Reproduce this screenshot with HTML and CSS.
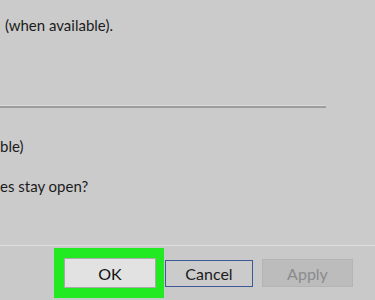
FILE: index.html
```html
<!DOCTYPE html>
<html lang="en">
<head>
    <meta charset="UTF-8">
    <meta name="viewport" content="width=device-width, initial-scale=1.0">
    <title>Options</title>
    <link rel="stylesheet" href="styles.css">
</head>
<body>
<div class="dialog">
    <div class="options">
        <p class="line first">(when available).</p>
        <div class="separator"></div>
        <p class="line second">ble)</p>
        <p class="line third">es stay open?</p>
    </div>
    <div class="footer">
        <span class="highlight"><button class="btn ok">OK</button></span>
        <button class="btn cancel">Cancel</button>
        <button class="btn apply" disabled>Apply</button>
    </div>
</div>
</body>
</html>
```

FILE: styles.css
```css
body {
    margin: 0;
    width: 375px;
    height: 300px;
    overflow: hidden;
    background: #cbcbcc;
    font-family: Lato, "Open Sans", Arial, sans-serif;
    font-size: 15px;
    color: #1b1b1b;
}
.dialog {
    display: flex;
    flex-direction: column;
    height: 300px;
}
.options {
    height: 245px;
}
.line {
    margin: 0;
    line-height: 20px;
    white-space: nowrap;
}
.line.first {
    padding-top: 15px;
    margin-left: 5px;
}
.separator {
    margin-top: 70px;
    width: 326px;
    height: 2px;
    background: #9d9d9e;
    border-top: 1px solid #d9d9da;
    box-sizing: content-box;
}
.line.second {
    margin-top: 28px;
}
.line.third {
    margin-top: 20px;
}
.footer {
    flex: 1;
    display: flex;
    align-items: flex-start;
    border-top: 1px solid #dedede;
    background: #c9c9ca;
    padding-top: 2px;
}
.highlight {
    margin-left: 54px;
    padding: 10px 8px 10px 10px;
    background: #22ea22;
    display: flex;
}
.btn {
    font-family: inherit;
    font-size: 16px;
    padding: 0;
    margin: 0;
}
.ok {
    width: 92px;
    height: 30px;
    background: #e2e2e2;
    border: 1px solid #a9a9a9;
    color: #111;
}
.cancel {
    margin: 12px 0 0 1px;
    width: 88px;
    height: 27px;
    background: #cbcbcc;
    border: 1px solid #3d5a98;
    color: #1b1b1b;
}
.apply {
    margin: 11px 0 0 9px;
    width: 91px;
    height: 28px;
    background: #bcbcbd;
    border: 1px solid #b4b4b5;
    color: #8b8b8c;
}
```
